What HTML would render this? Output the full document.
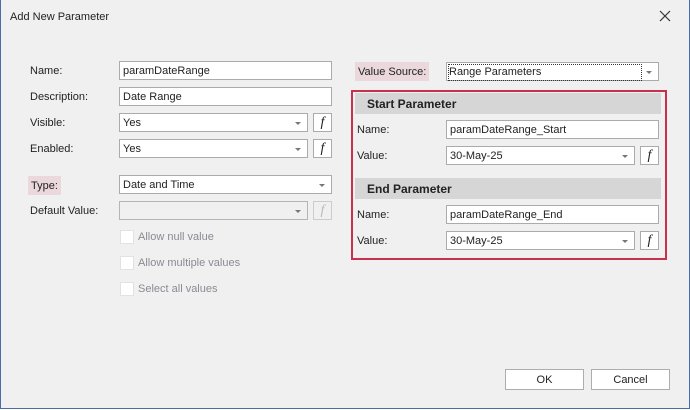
<!DOCTYPE html>
<html><head><style>
body{margin:0;width:690px;height:410px;overflow:hidden;font-family:"Liberation Sans",sans-serif;font-size:11px;color:#222}
.win{position:absolute;left:0;top:0;width:688px;height:408px;border:1px solid #4a6ea9;border-top:none;background:#f0f0f0}
.a{position:absolute}
.lbl{position:absolute;line-height:20px}
.in{position:absolute;height:17px;background:#fff;border:1px solid #ababab;line-height:19px;padding-left:3px;box-sizing:content-box}
.dd::after{content:"";position:absolute;right:6px;top:8px;border-left:3px solid transparent;border-right:3px solid transparent;border-top:3px solid #777}
.fb{position:absolute;width:17px;height:17px;background:#fff;border:1px solid #ababab;text-align:center;font-family:"Liberation Serif",serif;font-style:italic;font-size:14px;line-height:17px}
.hl{background:#ead8dc;padding:0 3px;margin-left:-3px;display:inline-block;line-height:18px;padding-top:1px}
.cb{position:absolute;width:12px;height:12px;background:#fff;border:1px solid #e2e2e2}
.dis{color:#8a8a94}
.hd{position:absolute;left:355px;width:306px;height:21px;background:#d6d6d6;font-weight:bold;font-size:12px;line-height:22px;padding-left:0}
.btn{position:absolute;width:77px;height:19px;background:#fff;border:1px solid #adadad;text-align:center;line-height:21px}
</style></head><body>
<div class="win"></div>
<div class="lbl" style="left:10px;top:7px">Add New Parameter</div>
<svg class="a" style="left:659px;top:10px" width="12" height="12"><path d="M1 1L11 11M11 1L1 11" stroke="#333" stroke-width="1.2"/></svg>

<div class="lbl" style="left:30px;top:61px">Name:</div>
<div class="in" style="left:119px;top:61px;width:208px">paramDateRange</div>
<div class="lbl" style="left:30px;top:87px">Description:</div>
<div class="in" style="left:119px;top:87px;width:208px">Date Range</div>
<div class="lbl" style="left:30px;top:113px">Visible:</div>
<div class="in dd" style="left:119px;top:113px;width:184px">Yes</div>
<div class="fb" style="left:313px;top:113px">f</div>
<div class="lbl" style="left:30px;top:139px">Enabled:</div>
<div class="in dd" style="left:119px;top:139px;width:184px">Yes</div>
<div class="fb" style="left:313px;top:139px">f</div>
<div class="lbl" style="left:31px;top:176px"><span class="hl">Type:</span></div>
<div class="in dd" style="left:119px;top:175px;width:208px">Date and Time</div>
<div class="lbl" style="left:30px;top:201px">Default Value:</div>
<div class="in dd" style="left:119px;top:201px;width:184px;background:#f0f0f0;border-color:#b5b5b5"></div>
<div class="fb" style="left:313px;top:201px;background:#f0f0f0;color:#bbb;border-color:#ccc">f</div>
<div class="cb" style="left:120px;top:230px"></div><div class="lbl dis" style="left:138px;top:227px">Allow null value</div>
<div class="cb" style="left:120px;top:256px"></div><div class="lbl dis" style="left:138px;top:253px">Allow multiple values</div>
<div class="cb" style="left:120px;top:282px"></div><div class="lbl dis" style="left:138px;top:279px">Select all values</div>

<div class="lbl" style="left:358px;top:62px"><span class="hl">Value Source:</span></div>
<div class="in dd" style="left:446px;top:62px;width:208px"><span style="outline:1px dotted #333;display:inline-block;line-height:15px;margin-top:1px;margin-left:-1px;width:192px;white-space:nowrap">Range Parameters</span></div>
<div class="a" style="left:351px;top:90px;width:312px;height:166px;border:2px solid #c8304e"></div>
<div class="hd" style="top:93px"><span style="padding-left:12px">Start Parameter</span></div>
<div class="lbl" style="left:357px;top:120px">Name:</div>
<div class="in" style="left:446px;top:120px;width:208px">paramDateRange_Start</div>
<div class="lbl" style="left:357px;top:146px">Value:</div>
<div class="in dd" style="left:446px;top:146px;width:184px">30-May-25</div>
<div class="fb" style="left:640px;top:146px">f</div>
<div class="hd" style="top:178px"><span style="padding-left:12px">End Parameter</span></div>
<div class="lbl" style="left:357px;top:205px">Name:</div>
<div class="in" style="left:446px;top:205px;width:208px">paramDateRange_End</div>
<div class="lbl" style="left:357px;top:231px">Value:</div>
<div class="in dd" style="left:446px;top:231px;width:184px">30-May-25</div>
<div class="fb" style="left:640px;top:231px">f</div>

<div class="btn" style="left:505px;top:369px">OK</div>
<div class="btn" style="left:591px;top:369px">Cancel</div>
</body></html>
